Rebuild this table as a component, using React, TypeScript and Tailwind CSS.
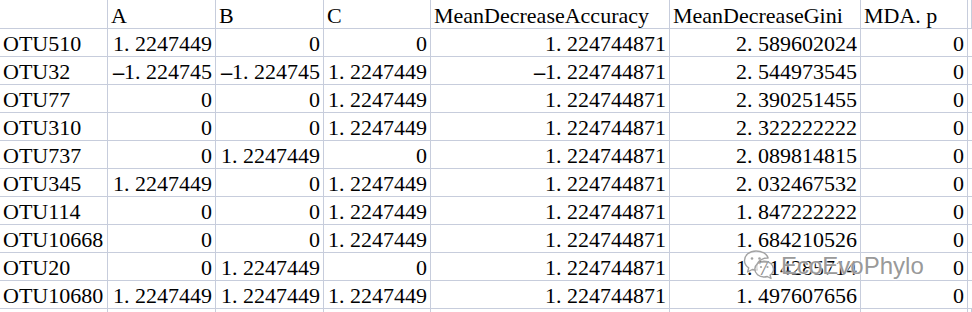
import React from 'react';

const headers = ['', 'A', 'B', 'C', 'MeanDecreaseAccuracy', 'MeanDecreaseGini', 'MDA.p', ''];

const rows: string[][] = [
    ['OTU510', '1.2247449', '0', '0', '1.224744871', '2.589602024', '0'],
    ['OTU32', '-1.224745', '-1.224745', '1.2247449', '-1.224744871', '2.544973545', '0'],
    ['OTU77', '0', '0', '1.2247449', '1.224744871', '2.390251455', '0'],
    ['OTU310', '0', '0', '1.2247449', '1.224744871', '2.322222222', '0'],
    ['OTU737', '0', '1.2247449', '0', '1.224744871', '2.089814815', '0'],
    ['OTU345', '1.2247449', '0', '1.2247449', '1.224744871', '2.032467532', '0'],
    ['OTU114', '0', '0', '1.2247449', '1.224744871', '1.847222222', '0'],
    ['OTU10668', '0', '0', '1.2247449', '1.224744871', '1.684210526', '0'],
    ['OTU20', '0', '1.2247449', '0', '1.224744871', '1.714285714', '0'],
    ['OTU10680', '1.2247449', '1.2247449', '1.2247449', '1.224744871', '1.497607656', '0'],
];

// SimSun-like spacing: the period and the minus take a full digit cell
function CellText({ text }: { text: string }) {
    return (
        <>
            {text.split('').map((ch, i) => {
                if (ch === '.') return <span key={i} className="mr-[5.5px]">.</span>;
                if (ch === '-')
                    return (
                        <span key={i} className="inline-block w-[11px] text-center scale-x-200">
                            -
                        </span>
                    );
                return <React.Fragment key={i}>{ch}</React.Fragment>;
            })}
        </>
    );
}

function WeChatMark() {
    return (
        <svg width="32" height="34" viewBox="0 0 32 34" fill="none">
            <path
                d="M13 2C6.4 2 1.5 6.3 1.5 11.5c0 3 1.6 5.6 4.2 7.4L4.6 23l4.6-2.5c1.2.3 2.4.5 3.8.5.4 0 .9 0 1.3-.1-.3-.9-.5-1.9-.5-2.9 0-5 4.6-9 10.4-9h.9C24 4.8 19 2 13 2z"
                fill="rgba(255,255,255,0.55)"
                stroke="#a3a3a3"
                strokeWidth="1.4"
                strokeLinejoin="round"
            />
            <circle cx="9" cy="9.5" r="1.3" fill="#a3a3a3" />
            <circle cx="16.5" cy="9.5" r="1.3" fill="#a3a3a3" />
            <path
                d="M24.2 10.2c-5.2 0-9.4 3.5-9.4 7.9s4.2 7.9 9.4 7.9c1.1 0 2.1-.2 3.1-.5l3.7 2-.9-3.3c2.1-1.4 3.4-3.6 3.4-6.1 0-4.4-4.2-7.9-9.3-7.9z"
                fill="rgba(255,255,255,0.55)"
                stroke="#a3a3a3"
                strokeWidth="1.4"
                strokeLinejoin="round"
                transform="translate(-3 2)"
            />
            <circle cx="18" cy="18" r="1.1" fill="#a3a3a3" />
            <circle cx="24.5" cy="18" r="1.1" fill="#a3a3a3" />
        </svg>
    );
}

export default function App() {
    return (
        <div className="relative w-[972px] h-[312px] overflow-hidden bg-white text-black font-serif text-[22px]">
            <div className="grid grid-cols-[108px_108px_108px_107px_239px_191px_107px_1fr] font-['Liberation_Serif','Times_New_Roman',serif]">
                {headers.map((h, i) => (
                    <div
                        key={'h' + i}
                        className="h-[29px] border-r border-b border-[#c7cddc] flex items-end pl-[3px] leading-[24px] whitespace-nowrap"
                    >
                        <CellText text={h} />
                    </div>
                ))}
                {rows.map((r, ri) => (
                    <React.Fragment key={ri}>
                        {r.map((v, ci) => (
                            <div
                                key={ci}
                                className={`h-[28px] border-r border-b border-[#c7cddc] flex items-end leading-[24px] whitespace-nowrap ${
                                    ci === 0 ? 'pl-[3px] justify-start' : 'pr-[3px] justify-end'
                                }`}
                            >
                                <CellText text={v} />
                            </div>
                        ))}
                        <div className="h-[28px] border-b border-[#c7cddc]" />
                    </React.Fragment>
                ))}
                {headers.map((_, i) => (
                    <div key={'e' + i} className="h-[28px] border-r border-[#c7cddc]" />
                ))}
            </div>

            <div className="absolute left-[743px] top-[249px] flex items-center gap-[6px]">
                <WeChatMark />
                <span className="font-['Liberation_Sans',Arial,sans-serif] text-[24px] leading-none text-[#8c8c8c]/90 [text-shadow:0_0_2px_#fff,0_0_2px_#fff]">
                    EcoEvoPhylo
                </span>
            </div>
        </div>
    );
}
